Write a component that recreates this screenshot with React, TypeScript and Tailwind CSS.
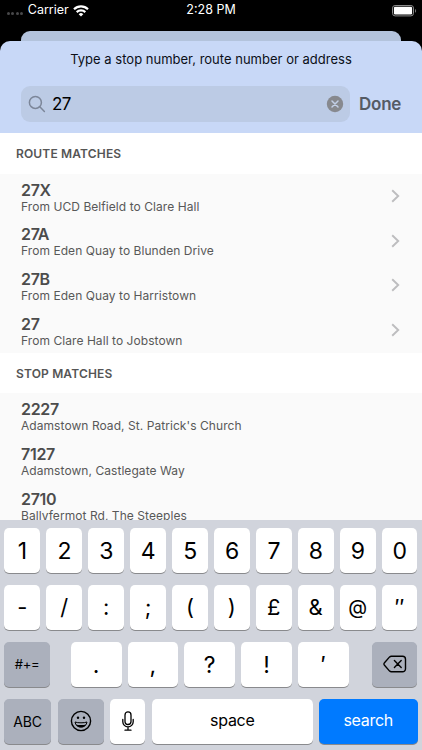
import type { ReactNode } from 'react'

interface Match {
  title: string
  detail: string
}

const routes: Match[] = [
  { title: '27X', detail: 'From UCD Belfield to Clare Hall' },
  { title: '27A', detail: 'From Eden Quay to Blunden Drive' },
  { title: '27B', detail: 'From Eden Quay to Harristown' },
  { title: '27', detail: 'From Clare Hall to Jobstown' },
]

const stops: Match[] = [
  { title: '2227', detail: "Adamstown Road, St. Patrick's Church" },
  { title: '7127', detail: 'Adamstown, Castlegate Way' },
  { title: '2710', detail: 'Ballyfermot Rd, The Steeples' },
]

const digits = ['1', '2', '3', '4', '5', '6', '7', '8', '9', '0']
const symbols = ['-', '/', ':', ';', '(', ')', '£', '&', '@', '″']
const punctuation = ['.', ',', '?', '!', '′']

function StatusBar() {
  return (
    <div className="grid h-[21px] grid-cols-3 items-center text-[12.5px] leading-none text-white">
      <div className="flex items-center pl-[6.5px]">
        <span className="flex gap-[1.6px] pt-[6px]">
          {[0, 1, 2, 3].map((dot) => (
            <span key={dot} className="h-[3px] w-[3px] rounded-full bg-[#48484a]" />
          ))}
        </span>
        <span className="ml-[4.5px]">Carrier</span>
        <svg className="ml-[4px] h-[12px] w-[16px]" viewBox="0 0 16 12" fill="none" stroke="white" strokeWidth="2.2">
          <path d="M1 4.2a10 10 0 0 1 14 0" />
          <path d="M3.7 7.1a6.2 6.2 0 0 1 8.6 0" />
          <path d="M8 11.6 5.7 9.2a3.3 3.3 0 0 1 4.6 0z" fill="white" stroke="none" />
        </svg>
      </div>
      <span className="text-center">2:28 PM</span>
      <div className="flex justify-end pr-[5px]">
        <svg className="h-[12px] w-[25px]" viewBox="0 0 25 12">
          <rect x="0.5" y="0.5" width="21" height="10.4" rx="2.6" fill="none" stroke="#8a8a8a" />
          <rect x="1.9" y="1.8" width="18.2" height="7.8" rx="1.3" fill="white" />
          <path d="M23 3.9v3.8c1.5-.6 1.5-3.2 0-3.8" fill="#777" />
        </svg>
      </div>
    </div>
  )
}

function SearchHeader() {
  return (
    <header className="h-[92px] rounded-t-[10px] bg-[#c8d8f7]">
      <p className="pt-[9px] text-center text-[13px] leading-[18px] tracking-[0.01px] text-[#0b0f18]">
        Type a stop number, route number or address
      </p>
      <div className="mt-[18px] flex items-center pl-[21px]">
        <div className="flex h-[36px] w-[329px] items-center rounded-[9px] bg-[#bccbe5] pr-[6px] pl-[7px]">
          <svg className="h-[18px] w-[18px]" viewBox="0 0 18 18" fill="none" stroke="#7c8699" strokeWidth="1.5" strokeLinecap="round">
            <circle cx="7.4" cy="7.4" r="6" />
            <path d="m11.8 11.8 4.6 4.7" />
          </svg>
          <span className="ml-[6px] flex-1 text-[17px] leading-none tracking-[-0.5px] text-black">27</span>
          <svg className="h-[18px] w-[18px]" viewBox="0 0 18 18">
            <circle cx="9" cy="9" r="8.2" fill="#87898e" />
            <path d="m6 6 6 6M12 6l-6 6" stroke="#c2cfe6" strokeWidth="1.5" strokeLinecap="round" />
          </svg>
        </div>
        <span className="ml-[9px] text-[17px] leading-none font-semibold tracking-[-0.25px] text-[#555b65]">Done</span>
      </div>
    </header>
  )
}

function SectionTitle({ children }: { children: ReactNode }) {
  return (
    <h2 className="flex h-[40.5px] items-center bg-white pt-[2px] pl-4 text-[12px] font-semibold tracking-[0.16px] text-[#555]">
      {children}
    </h2>
  )
}

function MatchList({ items, arrows = false }: { items: Match[]; arrows?: boolean }) {
  return (
    <ul className="bg-[#fafafa]">
      {items.map((item) => (
        <li key={item.title} className="flex h-[44.75px] px-[21px]">
          <div className="flex-1 pt-[7px]">
            <p className="text-[16px] leading-[18px] font-semibold tracking-[-0.3px] text-[#4c4c4c]">{item.title}</p>
            <p className="text-[12px] leading-[16px] tracking-[0.06px] text-[#585858]">{item.detail}</p>
          </div>
          {arrows && (
            <svg className="h-[14px] w-[10px] self-center" viewBox="0 0 10 14" fill="none" stroke="#bdbdbf" strokeWidth="1.9">
              <path d="m1.2 1.3 6 5.7-6 5.7" />
            </svg>
          )}
        </li>
      ))}
    </ul>
  )
}

function Key({ className, children }: { className: string; children: ReactNode }) {
  return (
    <button className={`flex h-[45.5px] items-center justify-center rounded-[5px] shadow-[0_1px_0_#898a8d] ${className}`}>
      {children}
    </button>
  )
}

function Keyboard() {
  return (
    <div className="flex h-[230.5px] shrink-0 flex-col gap-[11.5px] bg-[#d1d4dc] pt-[8px] pr-[4.5px] pl-[4.3px] text-black">
      <div className="grid grid-cols-10 gap-[6px]">
        {digits.map((k) => (
          <Key key={k} className="bg-white pt-px text-[23px] tracking-[-0.5px]">
            {k}
          </Key>
        ))}
      </div>
      <div className="grid grid-cols-10 gap-[6px]">
        {symbols.map((k) => (
          <Key key={k} className={`bg-white pt-px ${k === '@' ? 'text-[19.5px]' : 'text-[22px]'}`}>
            {k}
          </Key>
        ))}
      </div>
      <div className="flex justify-between">
        <Key className="w-[45.5px] bg-[#abb0bc] pt-px text-[13px] tracking-[-0.2px]">#+=</Key>
        <div className="flex gap-[6px] pr-[2.4px]">
          {punctuation.map((k) => (
            <Key key={k} className="w-[50.8px] bg-white pt-px text-[23px]">
              {k}
            </Key>
          ))}
        </div>
        <Key className="w-[45.5px] bg-[#abb0bc]">
          <svg className="h-[18px] w-[24px]" viewBox="0 0 24 18" fill="none" stroke="currentColor" strokeWidth="1.4" strokeLinecap="round" strokeLinejoin="round">
            <path d="M8.3 1.2h11.2a3 3 0 0 1 3 3v9.6a3 3 0 0 1-3 3H8.3a2.4 2.4 0 0 1-1.7-.7L1.5 10.3a1.8 1.8 0 0 1 0-2.6l5.1-5.8a2.4 2.4 0 0 1 1.7-.7z" />
            <path d="m11.4 5.5 6.8 7M18.2 5.5l-6.8 7" />
          </svg>
        </Key>
      </div>
      <div className="flex">
        <Key className="w-[46.5px] bg-[#abb0bc] text-[14px] tracking-[-0.2px]">ABC</Key>
        <Key className="ml-[7px] w-[46.5px] bg-[#abb0bc]">
          <svg className="h-[22px] w-[22px]" viewBox="0 0 22 22" fill="none" stroke="currentColor" strokeWidth="1.4">
            <circle cx="11" cy="11" r="9.6" />
            <circle cx="8" cy="7.8" r="1.2" fill="currentColor" stroke="none" />
            <circle cx="14" cy="7.8" r="1.2" fill="currentColor" stroke="none" />
            <path d="M5 12c1.6.6 3.6.8 6 .8s4.4-.2 6-.8c-.5 3.2-2.9 5.1-6 5.1S5.5 15.2 5 12z" strokeWidth="1" />
            <path d="M5.7 14.4c1.5.5 3.2.7 5.3.7s3.8-.2 5.3-.7c-1.1 1.9-2.9 2.8-5.3 2.8s-4.2-.9-5.3-2.8z" fill="currentColor" stroke="none" />
          </svg>
        </Key>
        <Key className="ml-[5.5px] w-[35.5px] bg-white">
          <svg className="h-[20px] w-[12px]" viewBox="0 0 12 20" fill="none" stroke="currentColor" strokeWidth="1.3" strokeLinecap="round">
            <rect x="3" y="0.9" width="6" height="12.6" rx="3" />
            <path d="M0.8 8.5v2.2a5.2 5.2 0 0 0 10.4 0V8.5M6 16v3M3 19.2h6" />
          </svg>
        </Key>
        <Key className="ml-[6.5px] w-[161px] bg-white pb-[2px] text-[16px] tracking-[-0.3px]">space</Key>
        <Key className="ml-[6px] flex-1 bg-[#007aff] pb-[2px] text-[16px] tracking-[-0.3px] text-white">search</Key>
      </div>
    </div>
  )
}

export default function App() {
  return (
    <div className="flex h-[750px] w-[422px] flex-col overflow-hidden bg-black font-['Inter',sans-serif]">
      <StatusBar />
      {/* edge of the card behind the search sheet */}
      <div className="mx-[21px] mt-[10px] h-[10px] shrink-0 rounded-t-[9px] bg-[#b3c3dc]" />
      <main className="min-h-0 flex-1 overflow-hidden">
        <SearchHeader />
        <SectionTitle>ROUTE MATCHES</SectionTitle>
        <MatchList items={routes} arrows />
        <SectionTitle>STOP MATCHES</SectionTitle>
        <MatchList items={stops} />
      </main>
      <Keyboard />
    </div>
  )
}
